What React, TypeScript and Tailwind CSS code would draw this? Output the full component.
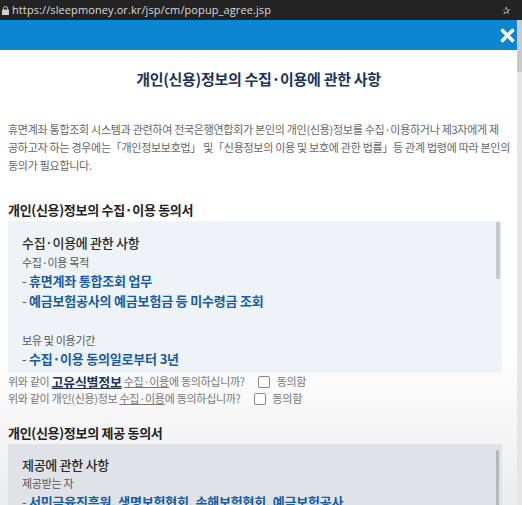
import React from "react";

const KR = { fontFamily: '"Malgun Gothic", "Noto Sans CJK KR", "Noto Sans", sans-serif' };

function Checkbox() {
  return <span className="inline-block w-[12px] h-[12px] border border-[#8a8a8a] rounded-[2px] bg-white mr-[7px]" />;
}

export default function App() {
  return (
    <div className="w-[522px] h-[505px] overflow-hidden flex flex-col bg-white" style={KR}>
      {/* address bar */}
      <div className="h-[20px] bg-[#232323] flex items-center pl-[2px] pr-[12px] shrink-0">
        <svg width="7" height="9" viewBox="0 0 7 9" className="mr-[3px]">
          <rect x="0" y="3.5" width="7" height="5.5" rx="0.5" fill="#cfcfcf" />
          <path d="M1.5 3.5V2.4a2 2 0 0 1 4 0v1.1" stroke="#cfcfcf" strokeWidth="1" fill="none" />
        </svg>
        <span className="text-[11px] text-[#dadada] tracking-[0.1px]" style={{ fontFamily: '"Open Sans", "Noto Sans", sans-serif' }}>
          https://sleepmoney.or.kr/jsp/cm/popup_agree.jsp
        </span>
        <span className="ml-auto text-[#bdbdbd] text-[10px] leading-none">✰</span>
      </div>
      <div className="flex flex-1 min-h-0">
        <div className="flex-1 flex flex-col min-w-0">
          {/* blue bar */}
          <div className="h-[30px] bg-[#0a87d0] flex items-center justify-end pr-[1px] shrink-0">
            <svg width="17" height="17" viewBox="0 0 17 17">
              <path d="M2.5 2.5L14.5 14.5M14.5 2.5L2.5 14.5" stroke="white" strokeWidth="3.4" strokeLinecap="butt" />
            </svg>
          </div>
          <div className="h-[1px] bg-[#dbeef9]" />
          {/* title */}
          <div className="h-[56px] flex items-center justify-center shrink-0 pt-[3px]">
            <h1 className="text-[15px] font-bold text-[#1d3557] tracking-[-0.3px]">개인(신용)정보의 수집·이용에 관한 사항</h1>
          </div>
          <div className="h-[2px] bg-[#a9adb1]" />
          <div className="flex-1 flex flex-col px-[8px] bg-gradient-to-b from-white from-60% to-[#ebebeb]">
            <p className="mt-[14px] text-[11px] leading-[18px] text-[#666] tracking-[-0.28px] whitespace-nowrap">
              휴면계좌 통합조회 시스템과 관련하여 전국은행연합회가 본인의 개인(신용)정보를 수집·이용하거나 제3자에게 제
              <br />
              공하고자 하는 경우에는「개인정보보호법」 및「신용정보의 이용 및 보호에 관한 법률」등 관계 법령에 따라 본인의
              <br />
              동의가 필요합니다.
            </p>
            <h2 className="mt-[27px] text-[13px] leading-[18px] font-semibold text-[#222] tracking-[-0.3px]">개인(신용)정보의 수집·이용 동의서</h2>
            <div className="mt-[2px] mr-[7px] h-[152px] bg-[#eef3f8] flex shrink-0">
              <div className="flex-1 pl-[14px] pt-[12px]">
                <div className="text-[13px] leading-[20px] font-medium text-[#2a2a2a] tracking-[-0.3px]">수집·이용에 관한 사항</div>
                <div className="text-[11px] leading-[18px] text-[#555] tracking-[-0.3px]">수집·이용 목적</div>
                <div className="text-[13px] leading-[20px] font-bold text-[#1a5b9c] tracking-[-0.2px]">
                  <span className="text-[#555] font-normal">- </span>휴면계좌 통합조회 업무
                </div>
                <div className="text-[13px] leading-[20px] font-bold text-[#1a5b9c] tracking-[-0.2px]">
                  <span className="text-[#555] font-normal">- </span>예금보험공사의 예금보험금 등 미수령금 조회
                </div>
                <div className="h-[20px]" />
                <div className="text-[11px] leading-[18px] text-[#555] tracking-[-0.3px]">보유 및 이용기간</div>
                <div className="text-[13px] leading-[20px] font-bold text-[#1a5b9c] tracking-[-0.2px]">
                  <span className="text-[#555] font-normal">- </span>수집·이용 동의일로부터 3년
                </div>
              </div>
              <div className="w-[4px] mr-[2px] mt-[1px] h-[57px] bg-[#c4c8cc] rounded-[1px]" />
            </div>
            <div className="mt-0 text-[11px] leading-[17px] text-[#777] tracking-[-0.3px]">
              <div className="flex items-center">
                위와 같이&nbsp;<span className="underline font-bold text-[13px] text-[#1d3557]">고유식별정보</span>&nbsp;<span className="underline">수집·이용</span>에 동의하십니까?
                <span className="ml-[13px] flex items-center"><Checkbox />동의함</span>
              </div>
              <div className="flex items-center">
                위와 같이 개인(신용)정보&nbsp;<span className="underline">수집·이용</span>에 동의하십니까?
                <span className="ml-[13px] flex items-center"><Checkbox />동의함</span>
              </div>
            </div>
            <h2 className="mt-[17px] text-[13px] leading-[18px] font-semibold text-[#222] tracking-[-0.3px]">개인(신용)정보의 제공 동의서</h2>
            <div className="mt-[2px] mr-[7px] flex-1 bg-[#dfe3e7] flex">
              <div className="flex-1 pl-[14px] pt-[11px]">
                <div className="text-[13px] leading-[20px] font-medium text-[#2a2a2a] tracking-[-0.3px]">제공에 관한 사항</div>
                <div className="text-[11px] leading-[16px] text-[#555] tracking-[-0.3px]">제공받는 자</div>
                <div className="text-[13px] leading-[22px] font-bold text-[#1a5b9c] tracking-[-0.2px] whitespace-nowrap">
                  <span className="text-[#555] font-normal">- </span>서민금융진흥원, 생명보험협회, 손해보험협회, 예금보험공사
                </div>
              </div>
              <div className="w-[3px] mr-[3px] mt-[6px] bg-[#b4b8bc] rounded-[1px]" />
            </div>
          </div>
        </div>
        {/* page scrollbar */}
        <div className="w-[5px] bg-[#e6e6e6] flex flex-col">
          <div className="h-[52px] bg-[#c9c9c9]" />
        </div>
      </div>
    </div>
  );
}
